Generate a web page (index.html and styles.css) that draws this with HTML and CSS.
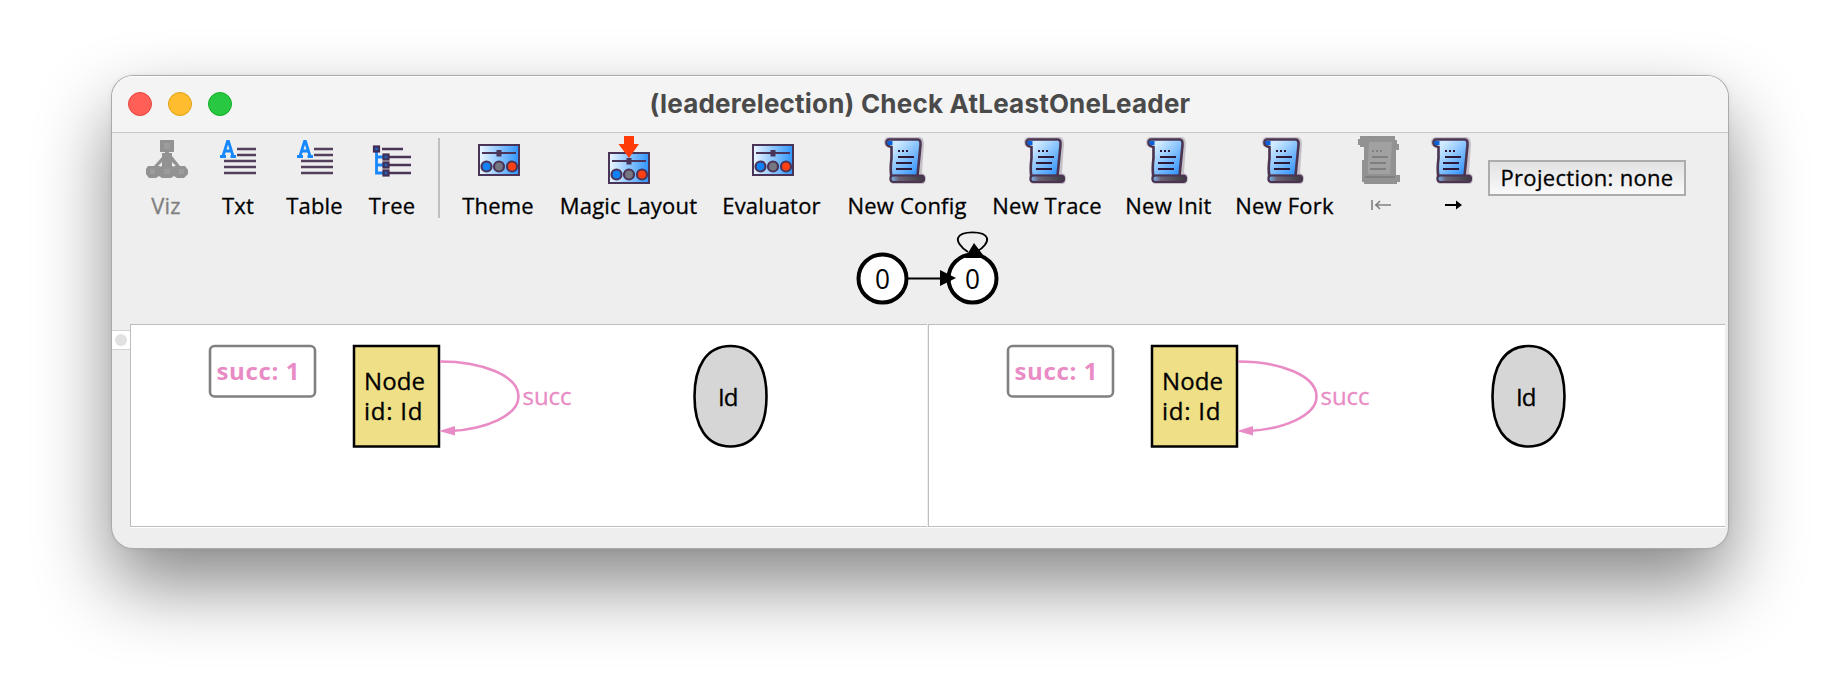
FILE: index.html
```
<!DOCTYPE html>
<html lang="en">
<head>
<meta charset="utf-8">
<title>(leaderelection) Check AtLeastOneLeader</title>
<link rel="stylesheet" href="styles.css">
</head>
<body>
<svg class="defs" width="0" height="0">
  <defs>
    <linearGradient id="blue" x1="0" y1="0" x2="1" y2="1"><stop offset=".2" stop-color="#d0ebff"/><stop offset=".95" stop-color="#2b8ffc"/></linearGradient>
    <linearGradient id="panelBlue"><stop offset="0" stop-color="#edf7ff"/><stop offset="1" stop-color="#2e95ff"/></linearGradient>
    <linearGradient id="roll"><stop offset="0" stop-color="#79b9f5"/><stop offset=".25" stop-color="#6c6375"/><stop offset="1" stop-color="#3e3942"/></linearGradient>
    <symbol id="scroll" viewBox="0 0 48 48">
      <path d="M5 1H37Q41 2 41 8L39 37Q43 38 43 42Q43 48 39 48H10Q6 47 6 40L8 12Q1 12 1 6Q1 2 5 1Z" fill="#6b5a70" opacity=".3"/>
      <path d="M6 3.500H35Q38 4 37.500 9L34.500 40H8.500Q7 34 8.500 22V11Q3 10 3.500 6Q4 3.500 6 3.500Z" fill="url(#blue)" stroke="#4a3450" stroke-width="2.600"/>
      <path d="M4 5H9.500V9H5Z" fill="#0b62d8"/>
      <rect x="7.500" y="39.500" width="33.500" height="6.500" rx="3" fill="url(#roll)" stroke="#4a3450" stroke-width="2.200"/>
      <path d="M15 15H17M19 15H21M23 15H25M15 21H31M13 27H29M13 33H29" stroke="#2e1838" stroke-width="2"/>
    </symbol>
    <symbol id="scroll-off" viewBox="0 0 48 48">
      <path d="M3 0H38V4H40V8H42V14H39V39H43V46H40V48H7V46H5V24H7V11H3V9H1V3H3Z" fill="#929292"/>
      <path d="M12 6H35L33 38H11V24Z" fill="#a1a1a1"/>
      <path d="M15 15H17M19 15H21M23 15H25M15 21H31M13 27H29M13 33H29M8 41H38" stroke="#7f7f7f" stroke-width="2"/>
    </symbol>
    <symbol id="panel" viewBox="0 0 42 32">
      <rect x="1" y="1" width="40" height="30" fill="url(#panelBlue)" stroke="#4a3457" stroke-width="2"/>
      <path d="M4 9H38" stroke="#4a3457" stroke-width="2"/>
      <rect x="18.500" y="6" width="5" height="6.500" fill="#4a3457"/>
      <g stroke="#4a3457" stroke-width="2.200"><circle cx="8.500" cy="22.500" r="5" fill="#1181f7"/><circle cx="21" cy="22.500" r="5" fill="#777781"/><circle cx="34" cy="22.500" r="5" fill="#ff4013"/></g>
    </symbol>
    <symbol id="lines" viewBox="0 0 48 48">
      <path d="M23 13H42M23 19H42M10 25H42M10 31H42M10 37H42" stroke="#533f5c" stroke-width="2.400"/>
      <path d="M9 20L13.500 5.500H14.500L19 20M10.500 15H17.500M6 20.500H12M16.500 20.500H22" fill="none" stroke="#1687fc" stroke-width="2.800"/>
    </symbol>
    <symbol id="trace" viewBox="0 0 680 201">
      <rect x="79" y="21" width="105" height="50.500" rx="4.500" fill="#fff" stroke="#808080" stroke-width="2.600"/>
      <text class="legend" x="85.500" y="55" textLength="83">succ: 1</text>
      <rect x="223" y="21" width="85" height="100.500" fill="#efdf86" stroke="#000" stroke-width="2.500"/>
      <text class="node" x="233" y="65" textLength="61">Node</text>
      <text class="node" x="233" y="95" textLength="58.500">id: Id</text>
      <path d="M309 36.500C352 36.500 387.500 51 387.500 71.500C387.500 91 354 104 320 106" fill="none" stroke="#e98bc5" stroke-width="2.600"/>
      <path d="M308 106L324 101V110.500Z" fill="#e98bc5"/>
      <text class="edge" x="391.500" y="79.500" textLength="49">succ</text>
      <path d="M599.500 21C624 21 635.500 42 635.500 71.500S624 121.500 599.500 121.500S563.500 101 563.500 71.500S575 21 599.500 21Z" fill="#d6d6d6" stroke="#000" stroke-width="2.600"/>
      <text class="node" x="587" y="81" textLength="20.500">Id</text>
    </symbol>
  </defs>
</svg>

<main class="window">
  <header class="titlebar">
    <div class="lights"><i class="close"></i><i class="minimise"></i><i class="zoom"></i></div>
    <h1>(leaderelection) Check AtLeastOneLeader</h1>
  </header>

  <nav class="toolbar">
    <button class="tool off"><svg viewBox="0 0 48 48"><path d="M25 12V21M25 21L10 36M25 21L40 36M25 21V36" stroke="#929292" stroke-width="4"/><path d="M18 4H32V16H18ZM20 17H30V20L38 30H12L20 21ZM6 30H14L16 32L20 30H30L34 32L36 30H43L46 34V38L42 42H35L32 40L29 42H20L17 40L14 42H7L4 38V33Z" fill="#929292"/><path d="M22 7H28V13H22ZM8 33H13V38H8ZM22 33H28V38H22ZM37 33H42V38H37Z" fill="#9c9c9c"/><path d="M16 30L20 26V30ZM30 26L34 30H30Z" fill="#eee"/></svg><span>Viz</span></button>
    <button class="tool"><svg><use href="#lines"/></svg><span>Txt</span></button>
    <button class="tool"><svg><use href="#lines"/></svg><span>Table</span></button>
    <button class="tool"><svg viewBox="0 0 48 48"><path d="M8.500 16V37H16M9 21H16M9 29H16" fill="none" stroke="#1687fc" stroke-width="2.800"/><path d="M14 13H35M21 21H43M21 29H43M21 37H43" stroke="#4a3457" stroke-width="2.400"/><g fill="#1d62bb" stroke="#422c52" stroke-width="2.200"><rect x="6" y="10.500" width="5" height="5"/><rect x="15.500" y="18.500" width="5" height="5"/><rect x="15.500" y="26.500" width="5" height="5"/><rect x="15.500" y="34.500" width="5" height="5"/></g></svg><span>Tree</span></button>
    <i class="separator"></i>
    <button class="tool"><svg viewBox="0 0 48 48"><use href="#panel" x="4" y="8" width="42" height="32"/></svg><span>Theme</span></button>
    <button class="tool"><svg viewBox="0 0 48 48"><use href="#panel" x="3" y="16" width="42" height="32"/><path d="M19 0H29V8H34L24 22L13.500 8H19Z" fill="#ff3b08"/></svg><span>Magic Layout</span></button>
    <button class="tool"><svg viewBox="0 0 48 48"><use href="#panel" x="4" y="8" width="42" height="32"/></svg><span>Evaluator</span></button>
    <button class="tool"><svg><use href="#scroll"/></svg><span>New Config</span></button>
    <button class="tool"><svg><use href="#scroll"/></svg><span>New Trace</span></button>
    <button class="tool"><svg><use href="#scroll"/></svg><span>New Init</span></button>
    <button class="tool"><svg><use href="#scroll"/></svg><span>New Fork</span></button>
    <button class="tool off"><svg><use href="#scroll-off"/></svg><svg class="arrow" viewBox="0 0 20 12"><path d="M1 1V11M4 6H20M9 2L5 6L9 10" fill="none" stroke="#808080" stroke-width="1.600"/></svg></button>
    <button class="tool"><svg><use href="#scroll"/></svg><svg class="arrow" viewBox="0 0 20 12"><path d="M1 6H15" stroke="#000" stroke-width="1.900"/><path d="M12 1.500L18 6L12 10.500Z"/></svg></button>
    <button class="projection">Projection: none</button>
  </nav>

  <section class="states">
    <svg viewBox="0 0 220 92" width="220" height="92">
      <g fill="#fff" stroke="#000" stroke-width="4"><circle cx="62.500" cy="46.500" r="24"/><circle cx="152.500" cy="46.500" r="24"/></g>
      <path d="M88 46.500H122" stroke="#000" stroke-width="2"/>
      <path d="M120 38V54L136 46Z"/>
      <path d="M148 20C140 15 137 9 138 6C141-1.500 164-1.500 167 6C168 10 164 16 156 20" fill="none" stroke="#000" stroke-width="1.900"/>
      <path d="M154 11L163 23V26L145 26Z"/>
      <text x="55" y="57" textLength="15" lengthAdjust="spacingAndGlyphs">0</text><text x="145" y="57" textLength="15" lengthAdjust="spacingAndGlyphs">0</text>
    </svg>
  </section>

  <section class="viewer">
    <aside class="gutter"><div class="handle"><i></i></div></aside>
    <div class="pane"><svg><use href="#trace"/></svg></div>
    <div class="pane"><svg><use href="#trace"/></svg></div>
  </section>
</main>
</body>
</html>
```
FILE: styles.css
```
* { box-sizing: border-box; }
body {
  margin: 0;
  padding: 76px 112px 0;
  height: 696px;
  overflow: hidden;
  background: #fff;
  font-family: "Open Sans", "Noto Sans", sans-serif;
}
.defs { position: absolute; }
.window {
  width: 1616px;
  height: 472px;
  display: flex;
  flex-direction: column;
  overflow: hidden;
  border-radius: 21px;
  background: #eee;
  box-shadow: 0 0 0 1px #aaa, 0 0 6px rgba(0,0,0,.08), 0 36px 76px rgba(0,0,0,.48);
}
.titlebar {
  height: 57px;
  flex: none;
  display: grid;
  grid-template-columns: 160px 1fr 160px;
  align-items: center;
  padding-bottom: 2px;
  background: #f4f4f4;
  border-top: 1px solid #fff;
  border-bottom: 1px solid #c6c6c6;
}
.lights { display: flex; gap: 16px; padding-left: 16px; }
.lights i { width: 24px; height: 24px; border-radius: 50%; border-width: 1px; border-style: solid; }
.close { background: #ff5f57; border-color: #e2463f; }
.minimise { background: #febc2e; border-color: #e1a116; }
.zoom { background: #28c840; border-color: #12ac28; }
h1 {
  margin: 0;
  text-align: center;
  font: 700 26px/30px Inter, sans-serif;
  letter-spacing: .2px;
  color: #4a4a4a;
}
.toolbar {
  height: 91px;
  flex: none;
  display: grid;
  grid-template-columns: 76px 68px 85px 70px 24px 94px 167px 119px 152px 128px 115px 117px 76px 69px 198px;
  padding: 3px 0 0 16px;
}
.tool {
  border: 0;
  padding: 0;
  background: none;
  font: 22px/28px "Open Sans", "Noto Sans", sans-serif;
  letter-spacing: .2px;
  -webkit-text-stroke: .3px;
  color: #000;
  display: flex;
  flex-direction: column;
  align-items: center;
  gap: 7px;
  white-space: nowrap;
}
.tool.off { color: #808080; }
.tool > svg { width: 48px; height: 48px; flex: none; }
.tool > .arrow { width: 20px; height: 12px; margin-top: 8px; }
.separator { width: 2px; height: 80px; margin: 2px auto 0; background: #bfbfbf; }
.projection {
  height: 36px;
  margin-top: 24px;
  padding: 0 0 2px;
  border: 2px solid #acacac;
  background: linear-gradient(#e2e2e2, #f9f9f9);
  font: 22px/28px "Open Sans", "Noto Sans", sans-serif;
  letter-spacing: .3px;
  -webkit-text-stroke: .3px;
  color: #000;
  white-space: nowrap;
}
.states { height: 100px; flex: none; padding: 8px 0 0 708px; }
.states svg { display: block; overflow: visible; }
.states text { font-size: 27px; }
.viewer { height: 204px; display: flex; }
.gutter { width: 18px; padding-top: 6px; }
.handle {
  height: 20px;
  display: flex;
  align-items: center;
  justify-content: center;
  background: #fff;
  border: solid #d4d4d4;
  border-width: 1px 0;
}
.handle i { width: 12px; height: 12px; border-radius: 50%; background: #e1e1e1; }
.pane {
  width: 797px;
  height: 203px;
  background: #fff;
  border: solid #bdbdbd;
  border-width: 1px 0 1px 1px;
  box-shadow: 0 1px #fff;
}
.pane + .pane { margin-left: 1px; }
.pane svg { display: block; width: 680px; height: 201px; }
.legend { font-size: 24px; font-weight: 700; fill: #e98bc5; }
.node { font-size: 24px; stroke: #000; stroke-width: .3px; }
.edge { font-size: 24px; fill: #e98bc5; stroke: #e98bc5; stroke-width: .3px; }
```
